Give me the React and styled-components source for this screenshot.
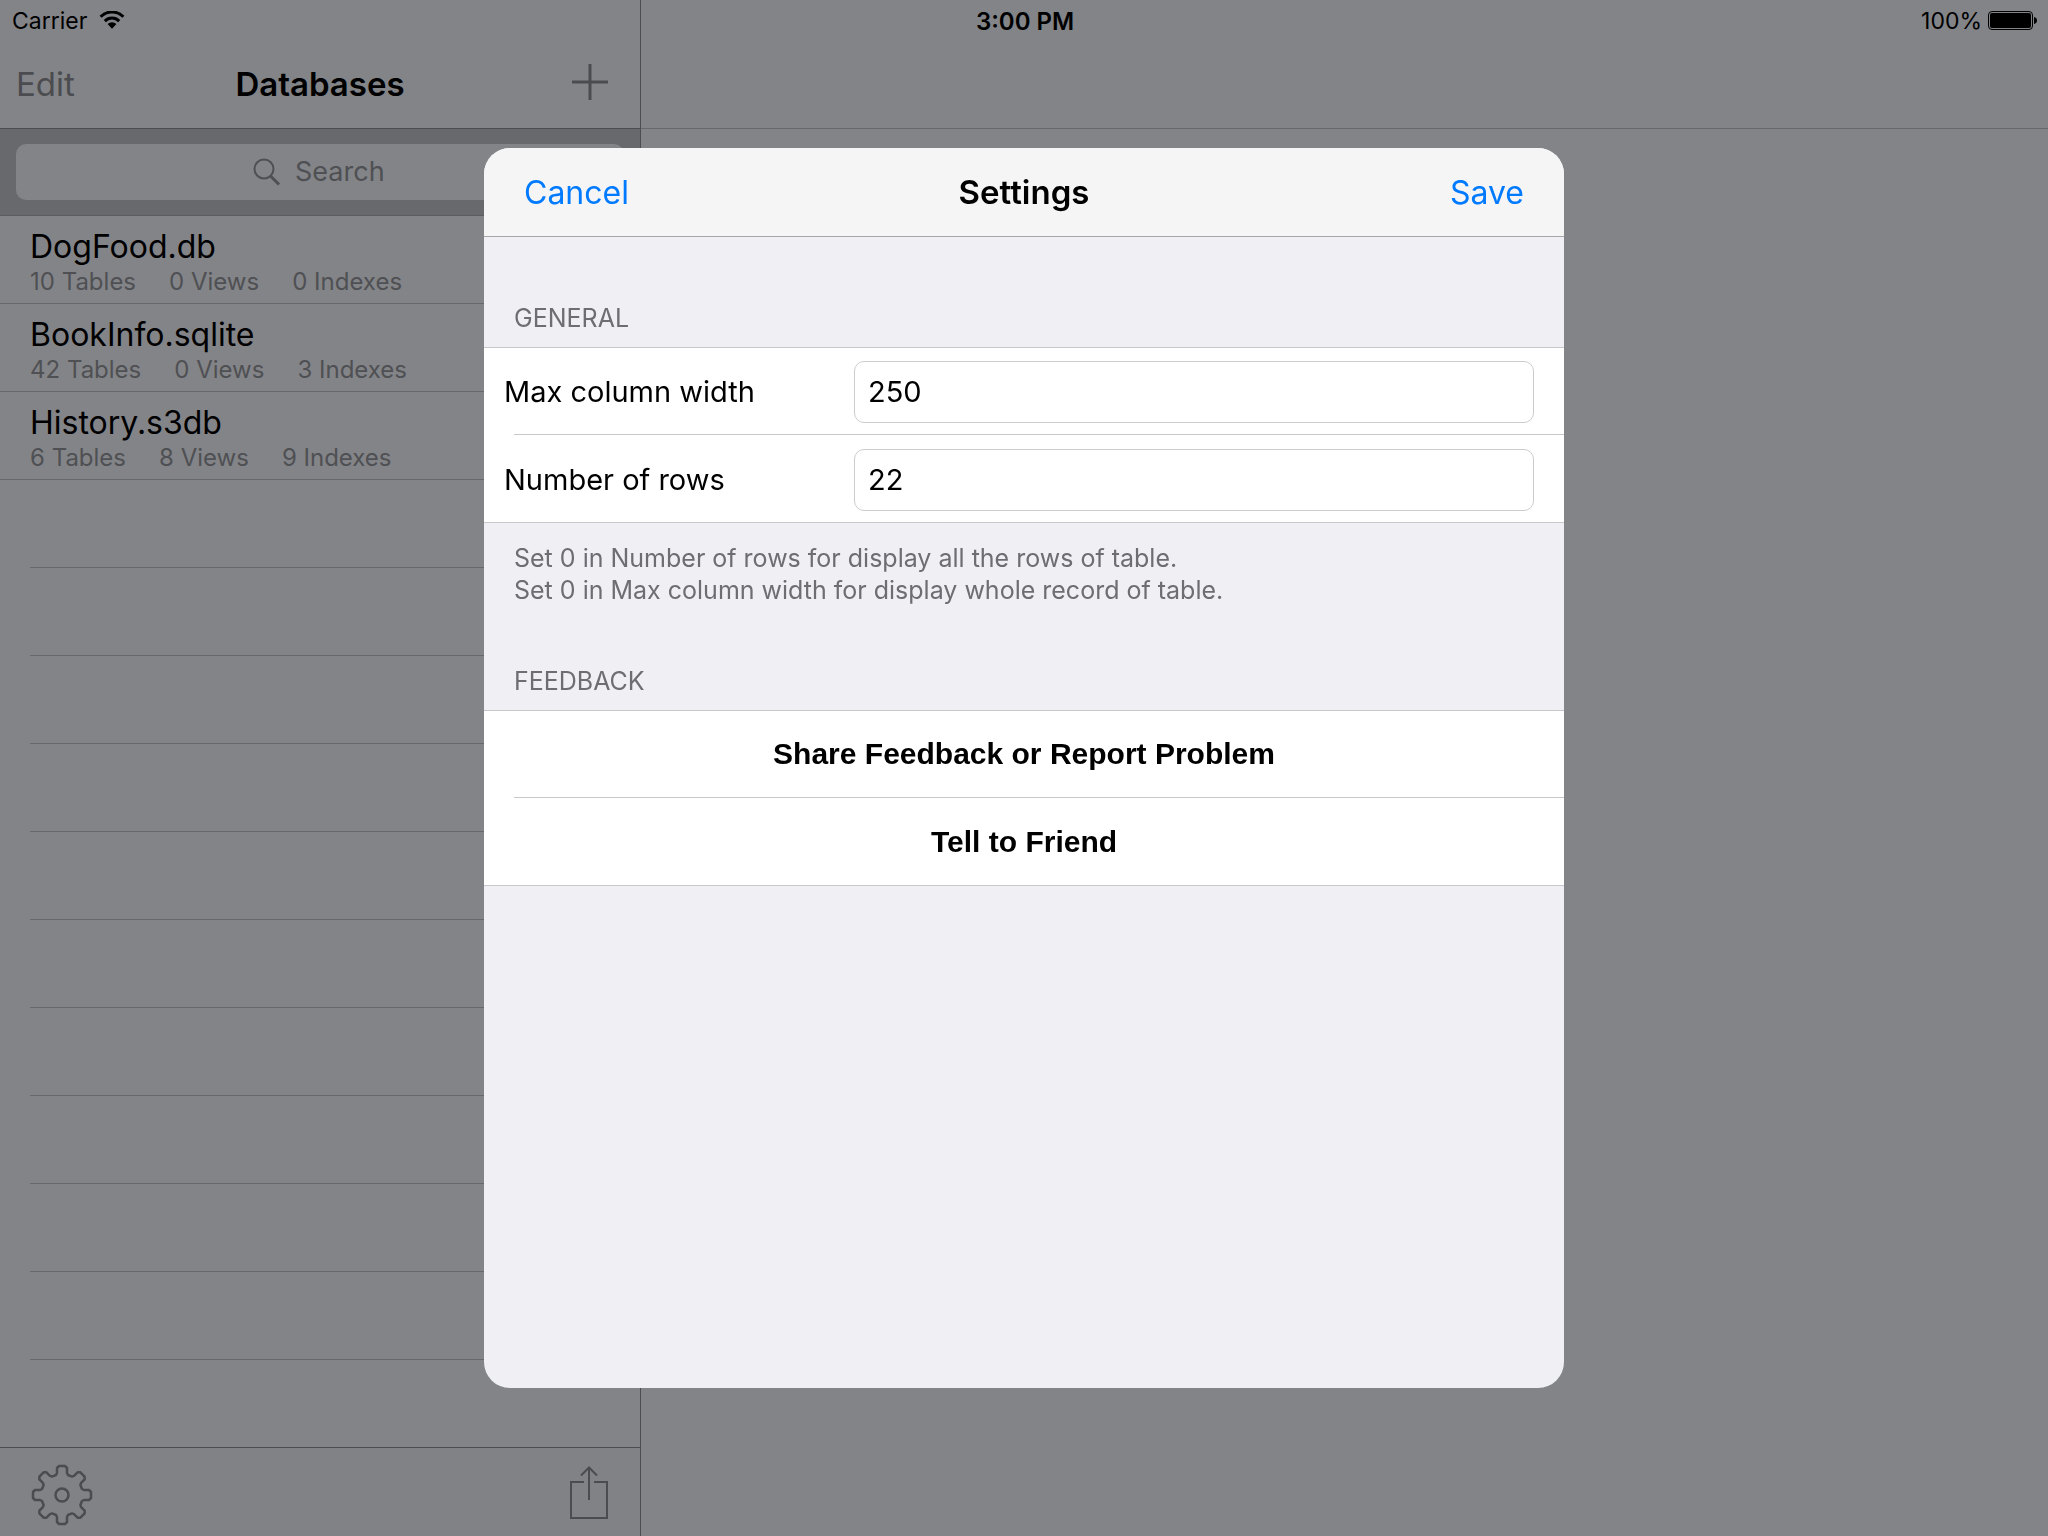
import React, { useState } from "react";
import styled, { createGlobalStyle } from "styled-components";

const databases = [
  { name: "DogFood.db", tables: 10, views: 0, indexes: 0 },
  { name: "BookInfo.sqlite", tables: 42, views: 0, indexes: 3 },
  { name: "History.s3db", tables: 6, views: 8, indexes: 9 },
];

const emptyRows = Array.from({ length: 11 }, (_, i) => i);

// one tooth = 45 degrees, outline goes round the centre
const gearPath = () => {
  const tooth = [
    [-6, -20],
    [-5, -22],
    [-5, -27],
    [-3, -29],
    [3, -29],
    [5, -27],
    [5, -22],
    [6, -20],
  ];
  const points = [];
  for (let i = 0; i < 8; i++) {
    const a = (i * Math.PI) / 4;
    tooth.forEach(([x, y]) => {
      const px = x * Math.cos(a) - y * Math.sin(a);
      const py = x * Math.sin(a) + y * Math.cos(a);
      points.push(`${px.toFixed(2)} ${py.toFixed(2)}`);
    });
  }
  return `M${points.join("L")}Z`;
};

const WifiIcon = () => (
  <svg width="26" height="20" viewBox="0 0 26 20" aria-hidden="true">
    <g fill="none" stroke="#000" strokeWidth="3">
      <path d="M1.6 5.7a16.2 16.2 0 0 1 22.8 0" />
      <path d="M5.8 10.1a10.2 10.2 0 0 1 14.4 0" />
    </g>
    <path d="M13 17.700l-4.400-4.600a6.200 6.200 0 0 1 8.800 0z" />
  </svg>
);

const BatteryIcon = () => (
  <svg width="50" height="20" viewBox="0 0 50 20" aria-hidden="true">
    <rect x="0.5" y="0.5" width="44" height="18" rx="3.5" fill="none" stroke="#000" />
    <rect x="2" y="2" width="41" height="15" rx="2" />
    <path d="M46 6c2 .4 3 1.800 3 3.500s-1 3.100-3 3.500z" />
  </svg>
);

const PlusIcon = () => (
  <svg width="36" height="36" viewBox="0 0 36 36" aria-hidden="true">
    <path d="M18 0v36M0 18h36" stroke="#4b4c4f" strokeWidth="3" />
  </svg>
);

const SearchIcon = () => (
  <svg width="28" height="28" viewBox="0 0 28 28" aria-hidden="true">
    <g fill="none" stroke="#4f5053" strokeWidth="2">
      <circle cx="11" cy="11" r="9.500" />
      <path d="M17.500 18l8.500 8.500" strokeWidth="3" />
    </g>
  </svg>
);

const GearIcon = () => (
  <svg width="62" height="62" viewBox="-31 -31 62 62" aria-hidden="true">
    <g fill="none" stroke="#4b4c4f" strokeWidth="2.5" strokeLinejoin="round">
      <path d={gearPath()} />
      <circle r="6.500" />
    </g>
  </svg>
);

const ShareIcon = () => (
  <svg width="38" height="58" viewBox="0 0 38 58" aria-hidden="true">
    <g fill="none" stroke="#4b4c4f" strokeWidth="2">
      <path d="M14 16H1v36h36V16H24" />
      <path d="M19 1v33M11 9.500l8-8 8 8" />
    </g>
  </svg>
);

const App = () => {
  const [columnWidth, setColumnWidth] = useState("250");
  const [rows, setRows] = useState("22");

  return (
    <Screen>
      <GlobalStyle />
      <Sidebar>
        <NavBar>
          <NavButton type="button">Edit</NavButton>
          <NavTitle>Databases</NavTitle>
          <AddButton type="button" aria-label="Add database">
            <PlusIcon />
          </AddButton>
        </NavBar>
        <SearchBar>
          <SearchField>
            <SearchIcon />
            <input type="search" placeholder="Search" aria-label="Search" />
          </SearchField>
        </SearchBar>
        <DatabaseList>
          {databases.map((db) => (
            <DatabaseRow key={db.name}>
              <h2>{db.name}</h2>
              <Counts>
                <span>{db.tables} Tables</span>
                <span>{db.views} Views</span>
                <span>{db.indexes} Indexes</span>
              </Counts>
            </DatabaseRow>
          ))}
          {emptyRows.map((row) => (
            <EmptyRow key={row} aria-hidden="true" />
          ))}
        </DatabaseList>
        <Toolbar>
          <IconButton type="button" aria-label="Settings">
            <GearIcon />
          </IconButton>
          <IconButton type="button" aria-label="Share">
            <ShareIcon />
          </IconButton>
        </Toolbar>
      </Sidebar>
      <Detail>
        <DetailBar />
      </Detail>

      <StatusBar>
        <StatusGroup>
          Carrier
          <WifiIcon />
        </StatusGroup>
        <Clock>3:00 PM</Clock>
        <StatusGroup $end>
          100%
          <BatteryIcon />
        </StatusGroup>
      </StatusBar>

      <Overlay>
        <Modal role="dialog" aria-labelledby="settings-title">
          <ModalHeader>
            <HeaderButton type="button">Cancel</HeaderButton>
            <ModalTitle id="settings-title">Settings</ModalTitle>
            <HeaderButton type="button" $end>
              Save
            </HeaderButton>
          </ModalHeader>
          <SectionTitle>GENERAL</SectionTitle>
          <Group>
            <FormRow>
              <label htmlFor="column-width">Max column width</label>
              <input
                id="column-width"
                type="text"
                value={columnWidth}
                onChange={(e) => setColumnWidth(e.target.value)}
              />
            </FormRow>
            <Separator />
            <FormRow>
              <label htmlFor="row-count">Number of rows</label>
              <input
                id="row-count"
                type="text"
                value={rows}
                onChange={(e) => setRows(e.target.value)}
              />
            </FormRow>
          </Group>
          <Note>
            Set 0 in Number of rows for display all the rows of table.
            <br />
            Set 0 in Max column width for display whole record of table.
          </Note>
          <SectionTitle $afterNote>FEEDBACK</SectionTitle>
          <Group>
            <ActionButton type="button">
              Share Feedback or Report Problem
            </ActionButton>
            <Separator />
            <ActionButton type="button">Tell to Friend</ActionButton>
          </Group>
        </Modal>
      </Overlay>
    </Screen>
  );
};

export default App;

const GlobalStyle = createGlobalStyle`
  * {
    box-sizing: border-box;
  }

  body {
    margin: 0;
    background: #838488;
    color: #000;
    font-family: Inter, "Liberation Sans", sans-serif;
  }

  h1, h2, p, ul {
    margin: 0;
    padding: 0;
  }

  button, input {
    font: inherit;
    color: inherit;
  }

  button {
    border: 0;
    padding: 0;
    background: none;
  }

  svg {
    display: block;
    flex: none;
  }
`;

const Screen = styled.div`
  display: flex;
  min-height: 100vh;
`;

const StatusBar = styled.header`
  position: absolute;
  top: 0;
  left: 0;
  right: 0;
  display: grid;
  grid-template-columns: 1fr auto 1fr;
  align-items: center;
  height: 42px;
  padding: 0 10px 0 12px;
  font-size: 23px;
`;

const StatusGroup = styled.div`
  display: flex;
  align-items: center;
  justify-content: ${({ $end }) => ($end ? "flex-end" : "flex-start")};
  gap: ${({ $end }) => ($end ? "6px" : "12px")};
`;

const Clock = styled.time`
  font-size: 24px;
  font-weight: 600;
`;

const Sidebar = styled.aside`
  display: flex;
  flex-direction: column;
  flex: none;
  width: 641px;
  border-right: 1px solid #4c4d50;
`;

const NavBar = styled.div`
  display: grid;
  grid-template-columns: 1fr auto 1fr;
  align-items: center;
  height: 129px;
  padding: 40px 16px 0;
  border-bottom: 1px solid #4c4d50;
  font-size: 33px;
`;

const NavButton = styled.button`
  justify-self: start;
  color: #4b4c4f;
`;

const AddButton = styled.button`
  justify-self: end;
  padding: 0 16px 4px 0;
`;

const NavTitle = styled.h1`
  font-size: 33px;
  font-weight: 600;
`;

const SearchBar = styled.div`
  height: 87px;
  padding: 15px 16px;
  background: #68696d;
  border-bottom: 1px solid #5c5d60;
`;

const SearchField = styled.div`
  display: flex;
  align-items: center;
  justify-content: center;
  gap: 14px;
  height: 56px;
  border-radius: 10px;
  background: #838488;

  input {
    width: 92px;
    border: 0;
    padding: 0 0 2px;
    background: none;
    font-size: 27px;
    outline: none;
    appearance: none;
  }

  input::-webkit-search-cancel-button {
    display: none;
  }

  input::placeholder {
    color: #4f5053;
    opacity: 1;
  }
`;

const DatabaseList = styled.ul`
  flex: 1;
  list-style: none;
`;

const DatabaseRow = styled.li`
  height: 88px;
  padding: 12px 30px 0;
  border-bottom: 1px solid #67686c;

  h2 {
    font-size: 32px;
    font-weight: 400;
    line-height: 38px;
  }
`;

const Counts = styled.p`
  display: flex;
  gap: 33px;
  font-size: 24px;
  line-height: 32px;
  color: #4f5053;
`;

const EmptyRow = styled.li`
  height: 88px;
  margin-left: 30px;
  border-bottom: 1px solid #67686c;

  &:last-child {
    height: 87px;
    border-bottom: 0;
  }
`;

const Toolbar = styled.div`
  display: flex;
  align-items: center;
  justify-content: space-between;
  height: 89px;
  padding: 5px 32px 0 31px;
  border-top: 1px solid #4c4d50;
  background: #818286;
`;

const IconButton = styled.button`
  display: flex;
`;

const Detail = styled.main`
  flex: 1;
`;

const DetailBar = styled.div`
  height: 129px;
  border-bottom: 1px solid #67686c;
`;

const Overlay = styled.div`
  position: fixed;
  inset: 0;
  display: flex;
  align-items: center;
  justify-content: center;
`;

const Modal = styled.section`
  width: 1080px;
  max-width: 100%;
  min-height: 1240px;
  border-radius: 26px;
  overflow: hidden;
  background: #efeff4;
`;

const ModalHeader = styled.header`
  display: grid;
  grid-template-columns: 1fr auto 1fr;
  align-items: center;
  height: 89px;
  padding: 0 40px;
  border-bottom: 1px solid #a7a7ab;
  background: #f5f5f6;
`;

const HeaderButton = styled.button`
  justify-self: ${({ $end }) => ($end ? "end" : "start")};
  font-size: 32px;
  color: #007aff;
`;

const ModalTitle = styled.h1`
  font-size: 33px;
  font-weight: 600;
`;

const SectionTitle = styled.h2`
  padding: ${({ $afterNote }) => ($afterNote ? "59px 30px 13px" : "65px 30px 13px")};
  font-size: 25px;
  font-weight: 400;
  line-height: 32px;
  color: #6d6d72;
`;

const Group = styled.div`
  border-top: 1px solid #c8c7cc;
  border-bottom: 1px solid #c8c7cc;
  background: #fff;
`;

const FormRow = styled.div`
  display: flex;
  align-items: flex-end;
  justify-content: space-between;
  height: 86px;
  padding: 0 30px 11px 20px;
  font-size: 29px;

  &:last-child {
    height: 87px;
  }

  label {
    line-height: 62px;
  }

  input {
    width: 680px;
    height: 62px;
    border: 1px solid #cccccc;
    border-radius: 10px;
    padding: 0 13px 2px;
    background: #fff;
    outline: none;
  }
`;

const Separator = styled.div`
  height: 1px;
  margin-left: 30px;
  background: #c8c7cc;
`;

const Note = styled.p`
  padding: 19px 30px 0;
  font-size: 25px;
  line-height: 32px;
  color: #6d6d72;
`;

const ActionButton = styled.button`
  display: block;
  width: 100%;
  height: 86px;
  font-family: "Liberation Sans", sans-serif;
  font-size: 30px;
  font-weight: 700;

  &:last-child {
    height: 87px;
  }
`;
